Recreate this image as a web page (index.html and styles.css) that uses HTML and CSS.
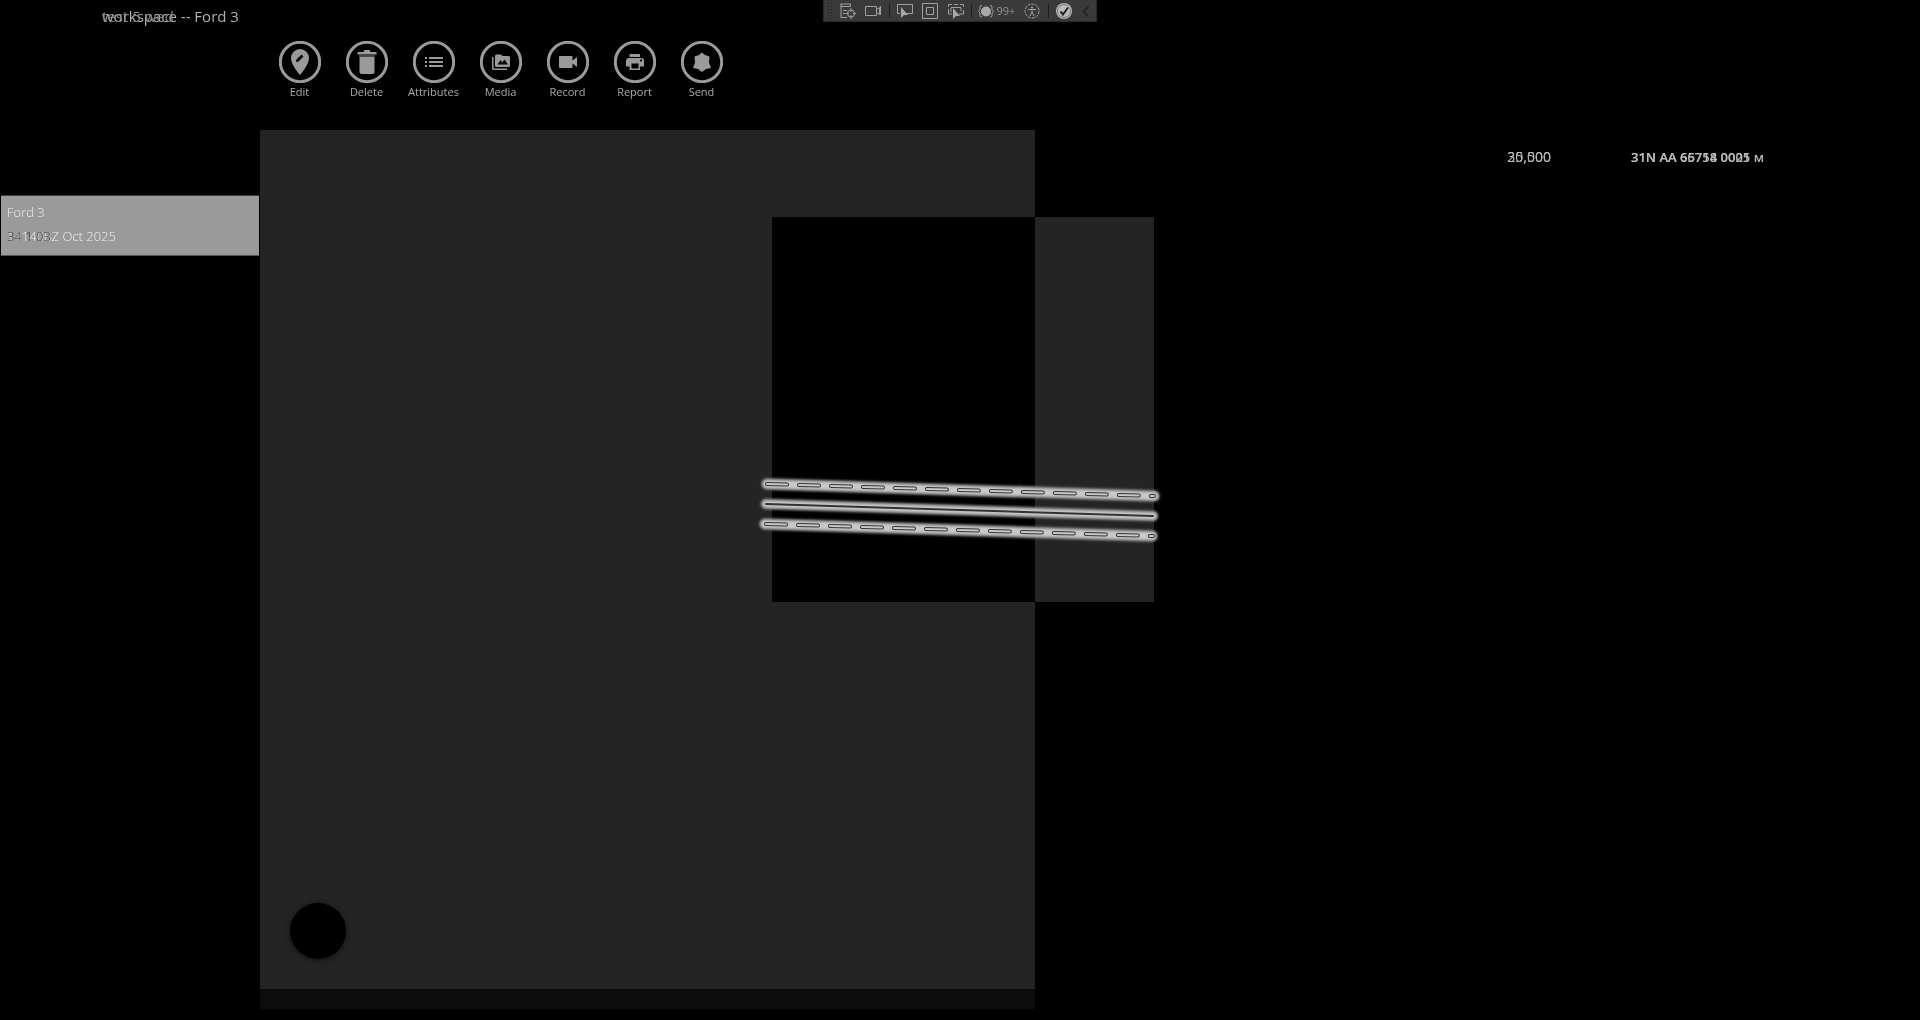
FILE: index.html
```
<!DOCTYPE html>
<html lang="en">
<head>
<meta charset="utf-8">
<title>workspace - Ford 3</title>
<link rel="stylesheet" href="styles.css">
</head>
<body>
<header class="header">
  <h1 class="title stack"><span>workspace -- Ford 3</span><span class="ghost">test 5 wed</span></h1>
  <nav class="actions" aria-label="Feature actions">
    <button class="action"><svg class="action-icon" viewBox="0 0 42 42"><circle class="ring" cx="21" cy="21" r="19.700"/><path d="M21 34S12 24 12 17a9 9 0 0 1 18 0c0 7-9 17-9 17z"/><path class="cut" d="M17 21l.5-2.500 5-5 2 2-5 5z"/></svg><span>Edit</span></button>
    <button class="action"><svg class="action-icon" viewBox="0 0 42 42"><circle class="ring" cx="21" cy="21" r="19.700"/><path d="M11.500 11h6l1-2h5l1 2h6v2.500h-19zM13.500 15.500h15V31a2 2 0 0 1-2 2h-11a2 2 0 0 1-2-2z"/><path class="shade" d="M13 13.500h16v2H13z"/></svg><span>Delete</span></button>
    <button class="action"><svg class="action-icon" viewBox="0 0 42 42"><circle class="ring" cx="21" cy="21" r="19.700"/><path d="M12 16h2v2h-2zM16 16h14v2H16zM12 20h2v2h-2zM16 20h14v2H16zM12 24h2v2h-2zM16 24h14v2H16z"/></svg><span>Attributes</span></button>
    <button class="action"><svg class="action-icon" viewBox="0 0 42 42"><circle class="ring" cx="21" cy="21" r="19.700"/><path d="M12 16h1.500v11.500H27V29H13.500a1.500 1.500 0 0 1-1.500-1.500zM16.500 13.500H21l1.500 1.500h6a1.500 1.500 0 0 1 1.500 1.500v8a1.500 1.500 0 0 1-1.500 1.500h-12a1.500 1.500 0 0 1-1.500-1.500V15a1.500 1.500 0 0 1 1.500-1.500z"/><path class="cut" d="M17.500 23.500l3-4.500 1.500 2.500 2.500-3 3.500 5z"/></svg><span>Media</span></button>
    <button class="action"><svg class="action-icon" viewBox="0 0 42 42"><circle class="ring" cx="21" cy="21" r="19.700"/><path d="M13 15h11.500a1 1 0 0 1 1 1v3.500L30 16v10l-4.500-3.500V26a1 1 0 0 1-1 1H13a1 1 0 0 1-1-1V16a1 1 0 0 1 1-1z"/></svg><span>Record</span></button>
    <button class="action"><svg class="action-icon" viewBox="0 0 42 42"><circle class="ring" cx="21" cy="21" r="19.700"/><path d="M15.500 13h10.500v3H15.500zM14.500 17h12.500a3 3 0 0 1 3 3v5.500h-4V29H15.500v-3.500H12V20a3 3 0 0 1 2.500-3z"/><path class="cut" d="M17.500 22.500h7v5h-7zM26 18.500h2v2h-2z"/></svg><span>Report</span></button>
    <button class="action"><svg class="action-icon" viewBox="0 0 42 42"><circle class="ring" cx="21" cy="21" r="19.700"/><path d="M21 11.500l3 2.500 4.500 1.500-.5 6 2 5.500-5 1-4 3-4-3-5-1 2-5.500-.5-6L18 14z"/></svg><span>Send</span></button>
  </nav>
</header>

<div class="debug-bar" role="toolbar" aria-label="Live visual tools">
  <span class="grip"></span>
  <button class="tool" aria-label="Live tree"><svg viewBox="0 0 16 16"><path d="M.5 1h10M1 1v13.500h6M1 3.500h9.500V1M3 7.500h4M3 10.500h2"/><path d="M11 5v4M11 12v4M5.500 10.500H9M13 10.500h3"/><circle cx="11" cy="10.500" r="3.500"/></svg></button>
  <button class="tool" aria-label="Camera"><svg viewBox="0 0 16 16"><path d="M.5 3.500h11v9H.5zM11.500 6.500l3-2v7l-3-2M15.500 3v9"/></svg></button>
  <span class="sep"></span>
  <button class="tool" aria-label="Select element"><svg viewBox="0 0 16 16"><path d="M3 10.500H.5v-9h15v9H9"/><path class="solid" d="M4 4v11l3-3h4z"/></svg></button>
  <button class="tool" aria-label="Layout adorners"><svg viewBox="0 0 16 16"><path d="M.5 .5h15v15H.5zM4.500 4.500h7v7h-7z"/></svg></button>
  <button class="tool" aria-label="Track focus"><svg viewBox="0 0 16 16"><path d="M.5 4V1.500H4M6 1.500h4M12 1.500h3.500V4M.5 6v5H4M15.500 7v4H11M3 9V4.500h10V8"/><path class="solid" d="M5 5v11l3-3h4z"/></svg></button>
  <span class="sep"></span>
  <button class="tool tool-count" aria-label="Binding failures"><svg viewBox="0 0 16 16"><circle class="solid" cx="8" cy="8.500" r="5"/><path d="M4 2.500H3q-1 0-1 2v2L.5 8.500 2 10v3q0 1 2 1M12 2.500h1q1 0 1 2v2l1.500 2L14 10v3q0 1-2 1"/></svg><span>99+</span></button>
  <button class="tool" aria-label="Accessibility"><svg viewBox="0 0 16 16"><circle cx="8" cy="8" r="7" stroke-dasharray="3 1"/><circle class="solid" cx="8" cy="4.500" r="1"/><path d="M4 6.500h8M8 6.500v3M8 9l-2 4M8 9l2 4"/></svg></button>
  <span class="sep"></span>
  <button class="tool" aria-label="Hot reload"><svg viewBox="0 0 16 16"><circle class="pale" cx="8" cy="8" r="8"/><circle class="rim" cx="8" cy="8" r="6.500"/><path class="dark tick" d="M4.500 8.500l2.500 3 5-7"/></svg></button>
  <button class="tool tool-end" aria-label="Collapse"><svg viewBox="0 0 16 16"><path class="dark tick" d="M10.500 3.500L5.500 8.500l5 5"/></svg></button>
</div>

<main class="workspace">
  <aside class="sidebar">
    <a class="item" href="#ford"><span>Ford 3</span><span class="stack"><span>141408Z Oct 2025</span><span class="ghost">34 1 03</span></span></a>
  </aside>
  <section class="map" aria-label="Map">
    <div class="tile"></div>
    <svg class="route" viewBox="0 0 400 70">
      <defs>
        <filter id="soft" x="-10" y="-10" width="420" height="90" filterUnits="userSpaceOnUse"><feGaussianBlur stdDeviation="1.200"/></filter>
        <path id="lane" d="M0 0L387 12"/>
      </defs>
      <g class="halo">
        <use href="#lane" x="7" y="9"/><use class="thin" href="#lane" x="6" y="29"/><use href="#lane" x="5" y="49"/>
      </g>
      <g class="glow">
        <use href="#lane" x="7" y="9"/><use class="thin" href="#lane" x="6" y="29"/><use href="#lane" x="5" y="49"/>
      </g>
      <g class="dash-edge"><use href="#lane" x="7" y="9"/><use href="#lane" x="6" y="49"/></g>
      <g class="dash-fill"><use href="#lane" x="7" y="9"/><use href="#lane" x="6" y="49"/></g>
      <use class="centre" href="#lane" x="6" y="29"/>
    </svg>
    <button class="fab" aria-label="Add"></button>
  </section>
  <section class="readout" aria-label="Map position">
    <span class="stack scale"><span>20,000</span><span class="ghost">35,500</span></span>
    <span class="stack grid-ref"><span>31N AA 66754 0005 м</span><span class="ghost">31N AA 65718 0021</span></span>
  </section>
</main>
</body>
</html>
```

FILE: styles.css
```
* { box-sizing: border-box; }

body {
  margin: 0;
  min-height: 100vh;
  display: flex;
  flex-direction: column;
  background: #000;
  color: #a6a6a6;
  font-family: "Open Sans", "Noto Sans", sans-serif;
}

button {
  padding: 0;
  border: 0;
  background: none;
  color: inherit;
  font: inherit;
}

/* Two readings drawn over each other */
.stack { position: relative; display: block; width: max-content; white-space: nowrap; }
.ghost { position: absolute; left: 0; top: 0; }

.header { height: 130px; }
.title {
  margin: 0 0 0 102px;
  padding-top: 4px;
  height: 36px;
  font-size: 15px;
  font-weight: 400;
  line-height: 24px;
  color: #b0b0b0;
}
.title .ghost { top: 4px; color: #858585; }

.actions { display: flex; padding-left: 266px; }
.action {
  width: 67px;
  display: flex;
  flex-direction: column;
  align-items: center;
  padding-top: 5px;
  color: #aaa;
  font-size: 11px;
  line-height: 18px;
}
.action-icon { width: 42px; height: 42px; fill: #9a9a9a; }
.ring { fill: none; stroke: #9a9a9a; stroke-width: 3; }
.cut { fill: #000; }
.shade { fill: #444; }

.debug-bar {
  position: absolute;
  top: 0;
  left: 50%;
  transform: translateX(-50%);
  display: flex;
  align-items: center;
  width: 274px;
  height: 22px;
  border: 1px solid #2a2a2a;
  border-top: 0;
  background: #3a3a3a;
}
.grip {
  width: 6px;
  height: 18px;
  margin: 0 2px 0 3px;
  background: radial-gradient(circle, #222 1px, transparent 1px) 0 0 / 3px 3px;
}
.sep { width: 1px; height: 14px; margin: 0 2px 0 3px; background: #1c1c1c; }
.tool { width: 26px; height: 22px; display: flex; align-items: center; justify-content: center; }
.tool svg { flex: none; width: 16px; height: 16px; fill: none; stroke: #a0a0a0; }
.tool .solid { fill: #a8a8a8; stroke: none; }
.tool .pale { fill: #bcbcbc; stroke: none; }
.tool .rim { stroke: #777; }
.tool .dark { stroke: #252525; }
.tool .tick { stroke-width: 2; }
.tool-count { width: 46px; color: #929292; font-size: 11px; gap: 2px; }
.tool-end { width: 20px; }

.workspace {
  flex: 1;
  display: grid;
  grid-template-columns: 260px 775fr 885fr;
  padding-bottom: 11px;
}

.sidebar { padding: 65px 1px 0; }
.item {
  display: flex;
  flex-direction: column;
  height: 61px;
  padding: 4px 6px;
  border-top: 1px solid #403838;
  border-bottom: 1px solid #555;
  background: #9a9a9a;
  color: #eee;
  font-size: 13px;
  font-weight: 300;
  line-height: 24px;
  text-decoration: none;
}
.item .ghost { color: #333; }

.map { position: relative; background: #242424; border-bottom: 20px solid #0c0c0c; }
.tile {
  position: absolute;
  left: 512px;
  top: 87px;
  width: 382px;
  height: 385px;
  background: #242424;
  mix-blend-mode: difference;
}
.route {
  position: absolute;
  left: 500px;
  top: 345px;
  width: 400px;
  height: 70px;
  overflow: visible;
  fill: none;
  stroke-linecap: round;
}
.halo { stroke: #777; stroke-width: 12; filter: url(#soft); }
.glow { stroke: #c8c8c8; stroke-width: 8; filter: url(#soft); }
.halo .thin { stroke-width: 11; }
.glow .thin { stroke-width: 7; }
.dash-edge { stroke: #333; stroke-width: 4; stroke-dasharray: 20 12; }
.dash-fill { stroke: #c8c8c8; stroke-width: 2; stroke-dasharray: 20 12; }
.centre { stroke: #333; stroke-width: 2; }

.fab {
  position: absolute;
  left: 30px;
  bottom: 30px;
  width: 56px;
  height: 56px;
  border-radius: 50%;
  background: #000;
  box-shadow: 0 1px 5px #111;
}

.readout {
  display: flex;
  justify-content: flex-end;
  gap: 80px;
  padding: 17px 148px 0 0;
  font-size: 14px;
  line-height: 20px;
  color: #b8b8b8;
}
.grid-ref { width: 141px; font-size: 13px; font-weight: 600; }
```
